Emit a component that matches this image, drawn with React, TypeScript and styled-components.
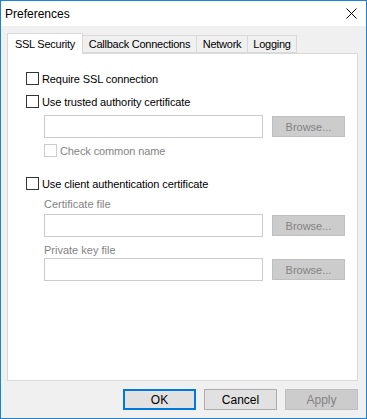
import React from "react";
import styled, { createGlobalStyle } from "styled-components";

const Global = createGlobalStyle`
  html, body { margin: 0; padding: 0; background: #ffffff; }
  body { font-family: "Liberation Sans", Arial, sans-serif; font-size: 11px; color: #000; }
  * { box-sizing: border-box; }
`;

const Window = styled.div`
  width: 367px;
  height: 419px;
  border: 1px solid #1883d7;
  display: flex;
  flex-direction: column;
  background: #f0f0f0;
`;

const TitleBar = styled.div`
  height: 25px;
  background: #ffffff;
  display: flex;
  align-items: center;
  justify-content: space-between;
  padding: 0 9px 0 4px;
  font-size: 12px;
`;

const Body = styled.div`
  flex: 1;
  display: flex;
  flex-direction: column;
  padding: 7px 8px 0 6px;
`;

const TabStrip = styled.div`
  display: flex;
  align-items: flex-end;
  height: 20px;
  position: relative;
  z-index: 1;
`;

const Tab = styled.div<{ $active?: boolean; $w: number }>`
  width: ${(p) => p.$w}px;
  height: ${(p) => (p.$active ? "21px" : "18px")};
  margin-bottom: ${(p) => (p.$active ? "-1px" : "0")};
  border: 1px solid #d9d9d9;
  border-bottom: ${(p) => (p.$active ? "none" : "1px solid #d9d9d9")};
  border-left: ${(p) => (p.$active ? "1px solid #d9d9d9" : "none")};
  background: ${(p) => (p.$active ? "#ffffff" : "#f0f0f0")};
  display: flex;
  align-items: center;
  justify-content: center;
  padding-bottom: ${(p) => (p.$active ? "1px" : "0")};
  letter-spacing: -0.25px;
  white-space: nowrap;
`;

const Panel = styled.div`
  width: 351px;
  height: 328px;
  border: 1px solid #d9d9d9;
  background: #ffffff;
  display: flex;
  flex-direction: column;
  padding: 18px 0 0 18px;
`;

const CheckRow = styled.label<{ $indent?: number; $top?: number; $disabled?: boolean }>`
  display: flex;
  align-items: center;
  gap: 3px;
  height: 13px;
  margin-left: ${(p) => p.$indent ?? 0}px;
  margin-top: ${(p) => p.$top ?? 0}px;
  color: ${(p) => (p.$disabled ? "#838383" : "#000")};
  letter-spacing: -0.1px;
  white-space: nowrap;
`;

const Box = styled.span<{ $disabled?: boolean }>`
  width: 13px;
  height: 13px;
  border: 1px solid ${(p) => (p.$disabled ? "#cccccc" : "#333333")};
  background: #ffffff;
  flex: none;
`;

const FieldRow = styled.div<{ $top: number }>`
  display: flex;
  align-items: center;
  gap: 9px;
  margin-left: 18px;
  margin-top: ${(p) => p.$top}px;
`;

const Field = styled.div`
  width: 219px;
  height: 23px;
  border: 1px solid #cccccc;
  background: #ffffff;
`;

const SmallButton = styled.div`
  width: 73px;
  height: 21px;
  border: 1px solid #bfbfbf;
  background: #cccccc;
  color: #838383;
  display: flex;
  align-items: center;
  justify-content: center;
`;

const Label = styled.div<{ $top: number }>`
  margin-left: 18px;
  margin-top: ${(p) => p.$top}px;
  color: #838383;
  height: 13px;
  line-height: 13px;
`;

const ButtonRow = styled.div`
  display: flex;
  justify-content: flex-end;
  gap: 8px;
  margin-top: 8px;
`;

const DialogButton = styled.div<{ $default?: boolean; $disabled?: boolean }>`
  width: 73px;
  height: 21px;
  border: ${(p) => (p.$default ? "2px solid #0078d7" : p.$disabled ? "1px solid #bfbfbf" : "1px solid #adadad")};
  background: ${(p) => (p.$disabled ? "#cccccc" : "#e1e1e1")};
  color: ${(p) => (p.$disabled ? "#838383" : "#000")};
  display: flex;
  align-items: center;
  justify-content: center;
  font-size: 12px;
`;

const CloseIcon = () => (
  <svg width="11" height="11" viewBox="0 0 11 11">
    <path d="M0.5 0.5 L10.5 10.5 M10.5 0.5 L0.5 10.5" stroke="#000" strokeWidth="1" />
  </svg>
);

export default function App() {
  return (
    <>
      <Global />
      <Window>
        <TitleBar>
          <span>Preferences</span>
          <CloseIcon />
        </TitleBar>
        <Body>
          <TabStrip>
            <Tab $active $w={76}>SSL Security</Tab>
            <Tab $w={114}>Callback Connections</Tab>
            <Tab $w={51}>Network</Tab>
            <Tab $w={49}>Logging</Tab>
          </TabStrip>
          <Panel>
            <CheckRow $top={0}>
              <Box />
              Require SSL connection
            </CheckRow>
            <CheckRow $top={10}>
              <Box />
              Use trusted authority certificate
            </CheckRow>
            <FieldRow $top={7}>
              <Field />
              <SmallButton>Browse...</SmallButton>
            </FieldRow>
            <CheckRow $indent={18} $top={6} $disabled>
              <Box $disabled />
              Check common name
            </CheckRow>
            <CheckRow $top={20}>
              <Box />
              Use client authentication certificate
            </CheckRow>
            <Label $top={8}>Certificate file</Label>
            <FieldRow $top={3}>
              <Field />
              <SmallButton>Browse...</SmallButton>
            </FieldRow>
            <Label $top={7}>Private key file</Label>
            <FieldRow $top={1}>
              <Field />
              <SmallButton>Browse...</SmallButton>
            </FieldRow>
          </Panel>
          <ButtonRow>
            <DialogButton $default>OK</DialogButton>
            <DialogButton>Cancel</DialogButton>
            <DialogButton $disabled>Apply</DialogButton>
          </ButtonRow>
        </Body>
      </Window>
    </>
  );
}
